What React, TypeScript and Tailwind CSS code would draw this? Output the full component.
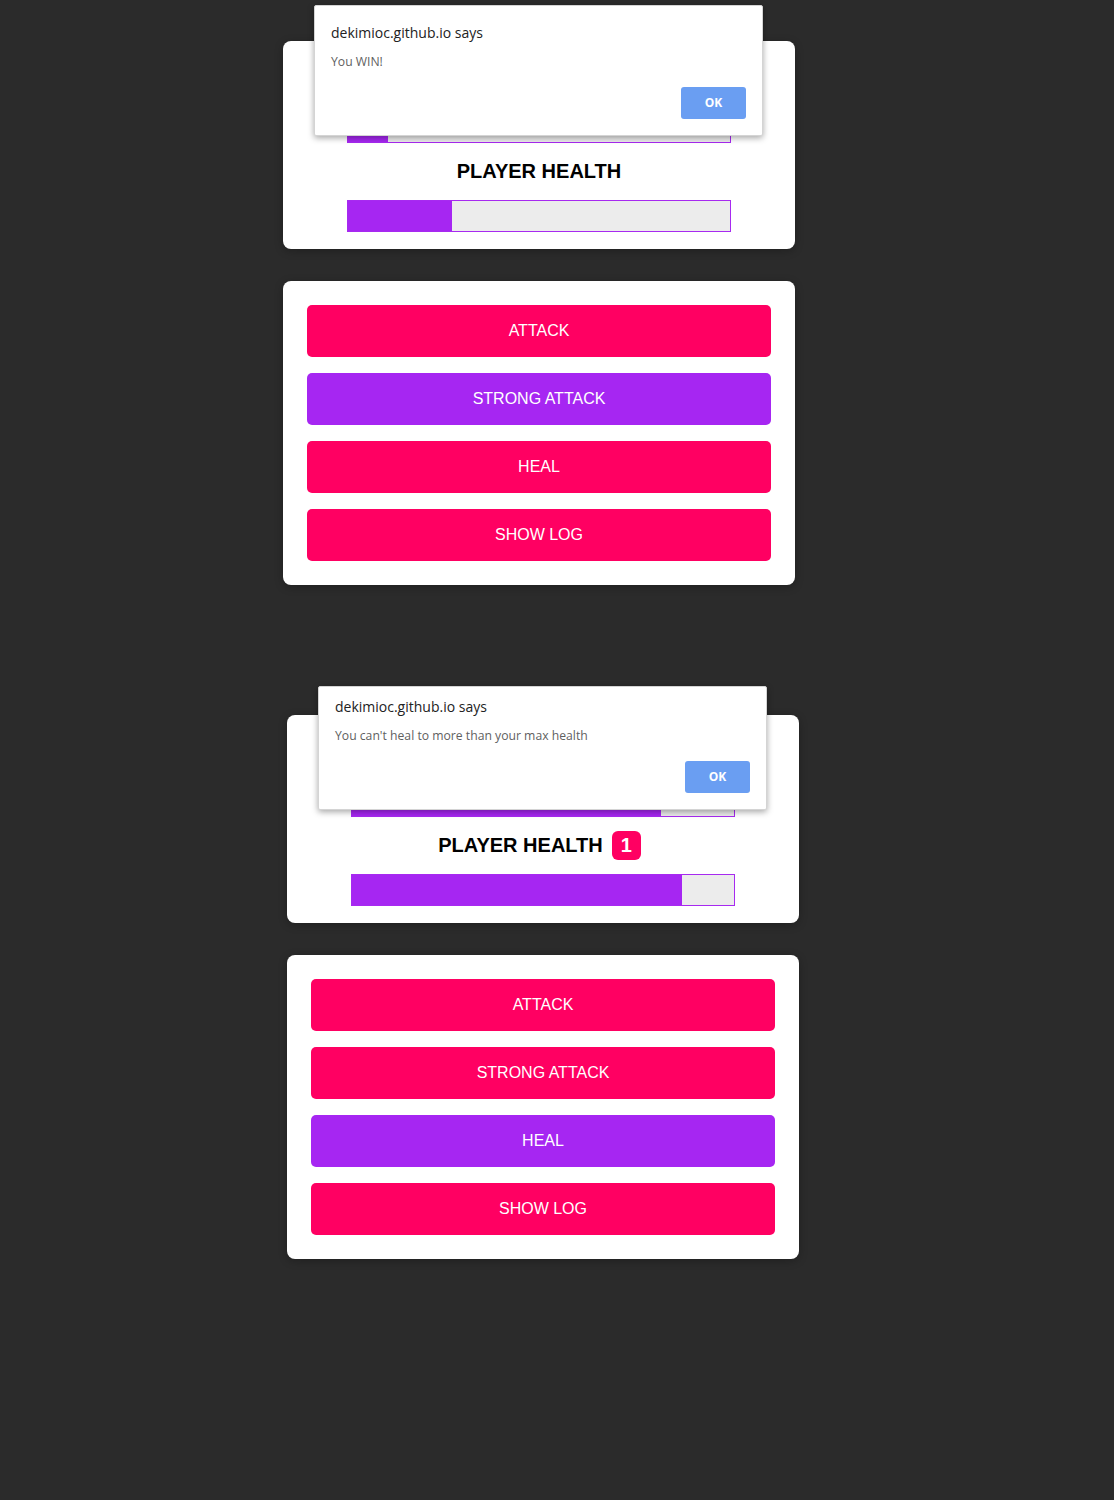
import React from "react";

interface BarProps {
  value: number;
}

const HealthBar = ({ value }: BarProps) => (
  <div className="w-[384px] h-[32px] mx-auto border border-[#a72af0] bg-[#ececec] flex">
    <div className="h-full bg-[#a626f2]" style={{ width: `${value}%` }} />
  </div>
);

interface DialogProps {
  message: string;
  className: string;
}

const AlertDialog = ({ message, className }: DialogProps) => (
  <div
    className={`absolute w-[449px] bg-white border border-[#d4d4d4] rounded-[2px] shadow-[0_2px_6px_rgba(0,0,0,0.35)] px-4 pb-[16px] ${className}`}
    style={{ fontFamily: '"Open Sans", "Noto Sans", sans-serif' }}
  >
    <p className="text-[14px] leading-[20px] text-[#222]">dekimioc.github.io says</p>
    <p className="mt-[11px] text-[12.2px] leading-[16px] text-[#5f5f5f]">{message}</p>
    <div className="flex justify-end mt-[17px]">
      <button className="w-[65px] h-[32px] rounded-[3px] bg-[#6a9ef2] text-white text-[12px] font-bold">
        OK
      </button>
    </div>
  </div>
);

interface GameProps {
  monster: number;
  player: number;
  badge?: string;
  active: string;
  message: string;
  dialogClass: string;
}

const buttons = ["ATTACK", "STRONG ATTACK", "HEAL", "SHOW LOG"];

const Game = ({ monster, player, badge, active, message, dialogClass }: GameProps) => (
  <div className="relative w-[512px]">
    <div className="bg-white rounded-[8px] pt-[29px] pb-[17px] shadow-[0_2px_8px_rgba(0,0,0,0.26)]">
      <h2 className="h-[24px] text-[20px] leading-[24px] font-bold text-black text-center">MONSTER HEALTH</h2>
      <div className="mt-[17px]">
        <HealthBar value={monster} />
      </div>
      <div className={`mt-[16px] h-[24px] flex items-center justify-center gap-[9px] ${badge ? "pr-[7px]" : ""}`}>
        <h2 className="text-[20px] leading-[24px] font-bold text-black">PLAYER HEALTH</h2>
        {badge && (
          <span className="w-[29px] h-[29px] rounded-[6px] bg-[#ff0062] text-white text-[20px] font-bold flex items-center justify-center">
            {badge}
          </span>
        )}
      </div>
      <div className="mt-[17px]">
        <HealthBar value={player} />
      </div>
    </div>

    <div className="mt-[32px] bg-white rounded-[8px] p-6 flex flex-col gap-4 shadow-[0_2px_8px_rgba(0,0,0,0.26)]">
      {buttons.map((label) => (
        <button
          key={label}
          className={`h-[52px] rounded-[5px] text-white text-[16px] ${
            label === active ? "bg-[#a626f2]" : "bg-[#ff0062]"
          }`}
        >
          {label}
        </button>
      ))}
    </div>

    <AlertDialog message={message} className={dialogClass} />
  </div>
);

export default function App() {
  return (
    <div
      className="min-h-[1500px] bg-[#2b2b2b] pt-[41px]"
      style={{ fontFamily: '"Liberation Sans", Arial, sans-serif' }}
    >
      <div className="pl-[283px]">
        <Game
          monster={10.5}
          player={27.2}
          active="STRONG ATTACK"
          message="You WIN!"
          dialogClass="top-[-36px] left-[31px] pt-[17px]"
        />
      </div>
      <div className="pl-[287px] mt-[130px]">
        <Game
          monster={80.9}
          player={86.4}
          badge="1"
          active="HEAL"
          message="You can't heal to more than your max health"
          dialogClass="top-[-29px] left-[31px] pt-[10px]"
        />
      </div>
    </div>
  );
}
